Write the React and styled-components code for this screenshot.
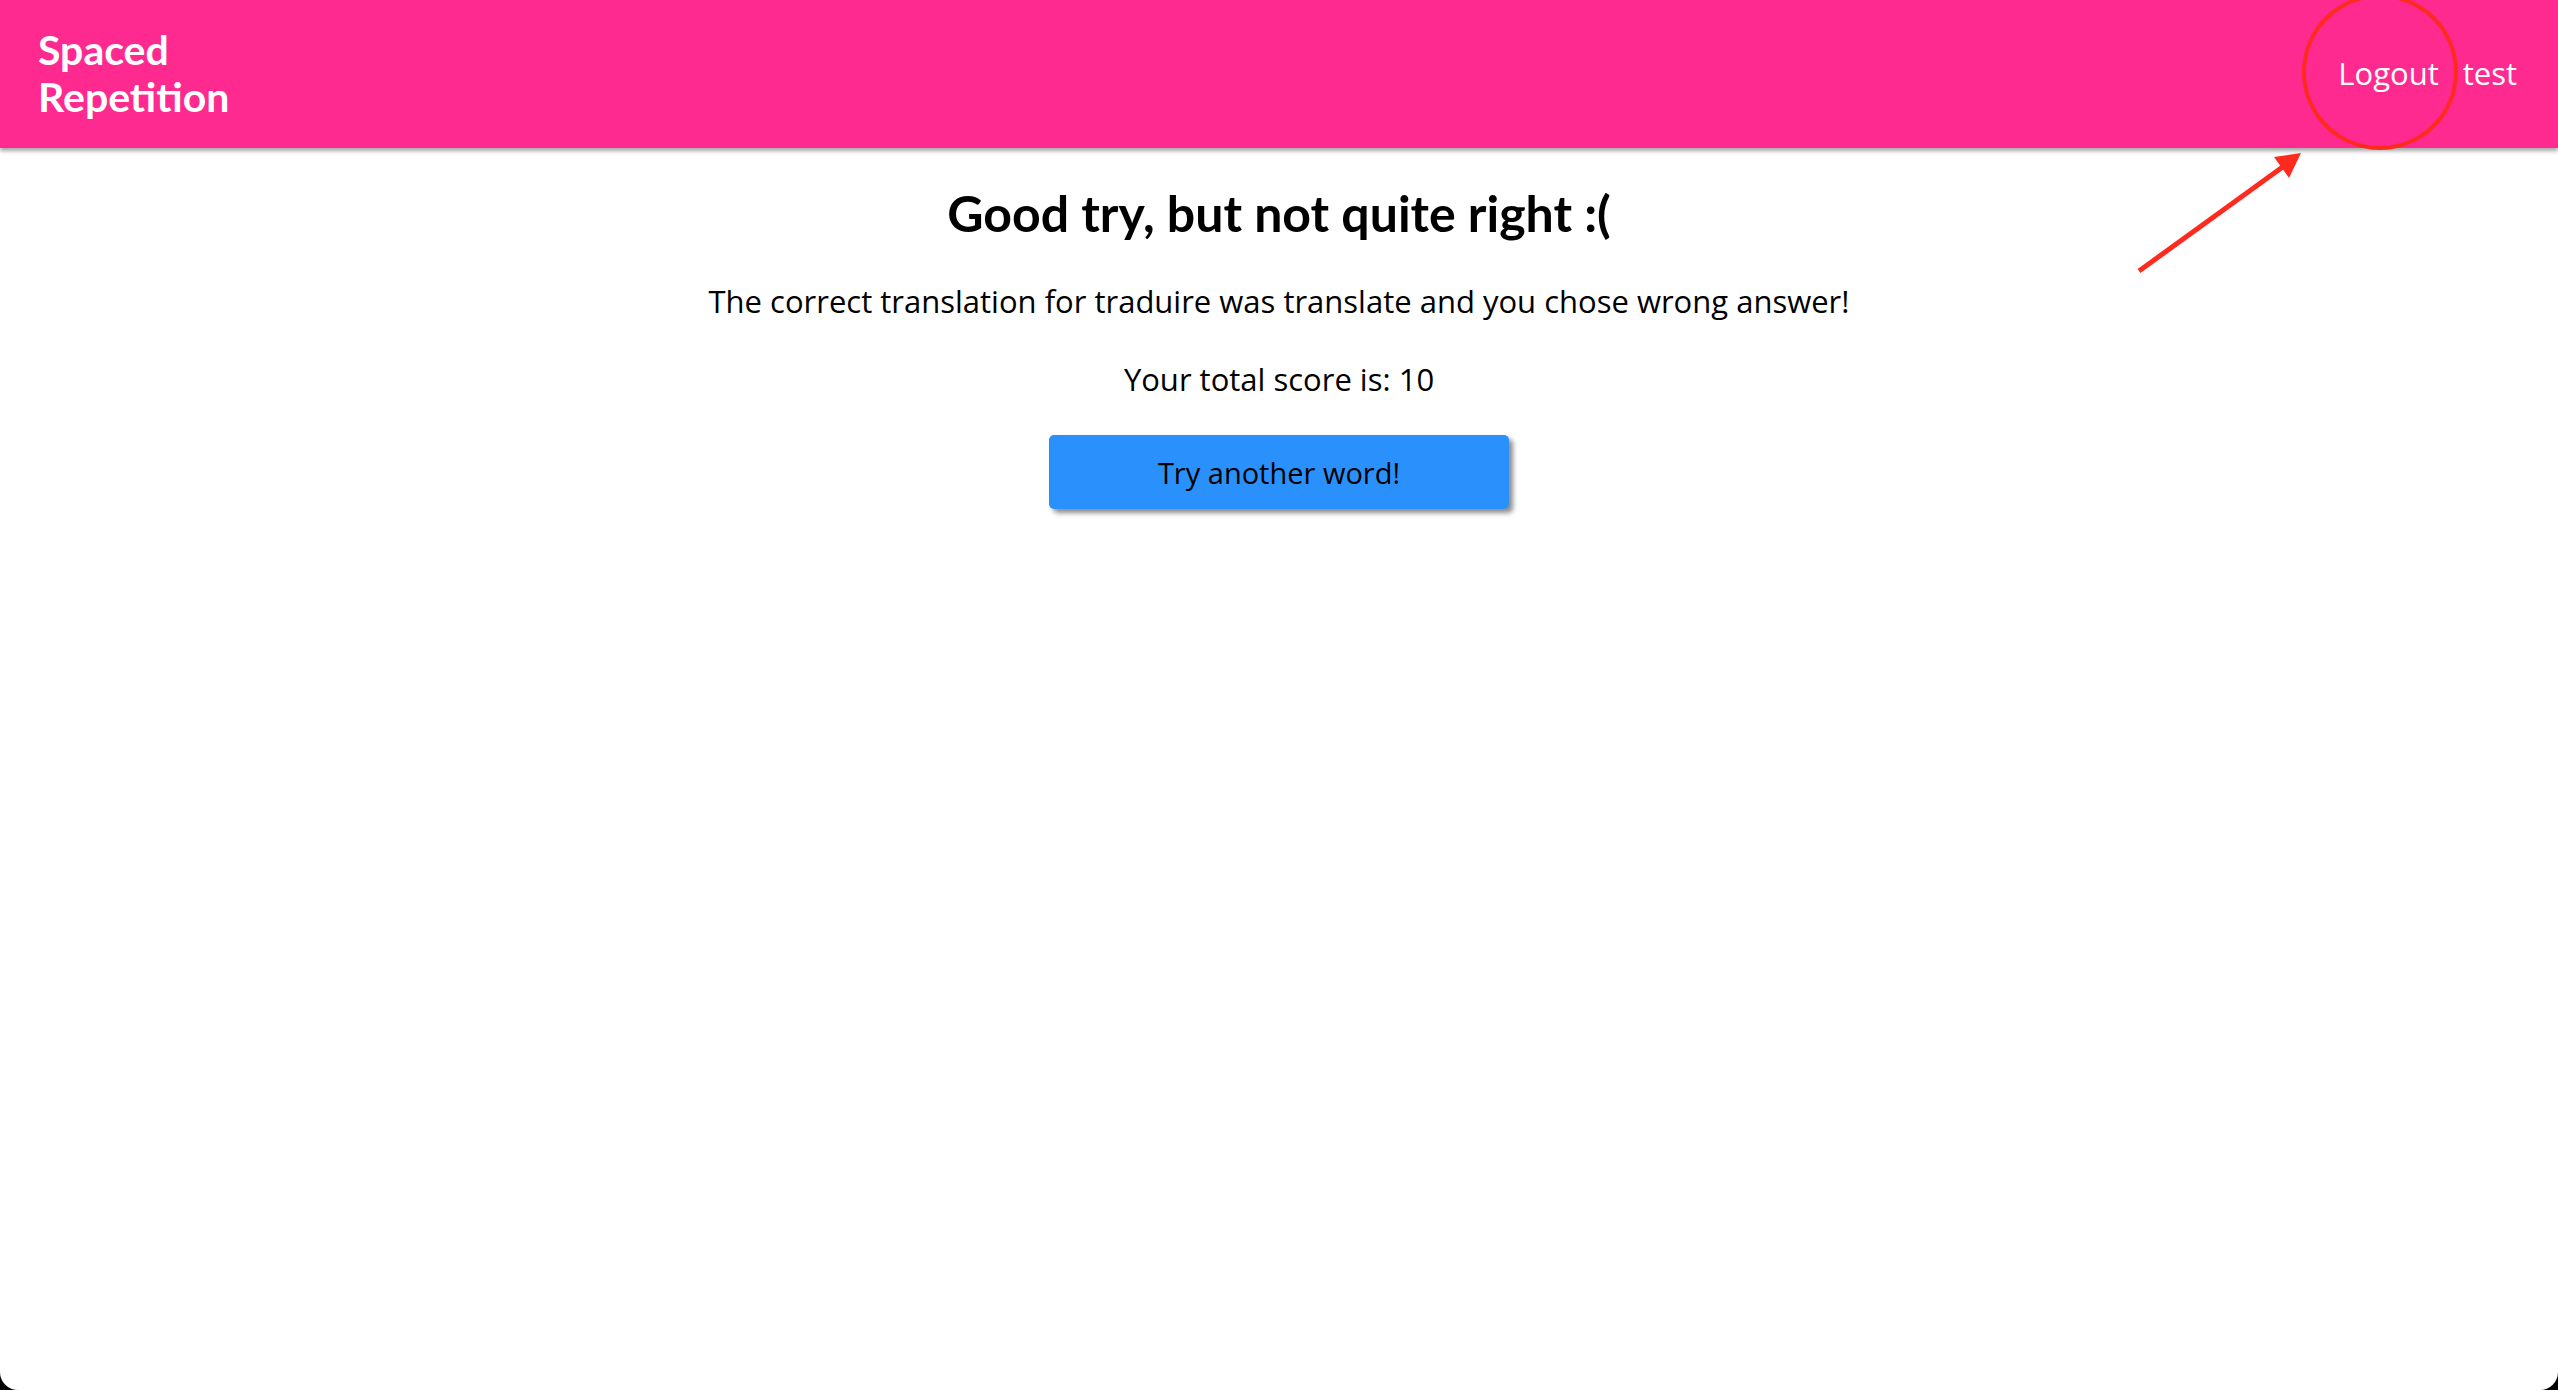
import React from 'react';
import styled, { createGlobalStyle } from 'styled-components';

const GlobalStyle = createGlobalStyle`
  html, body {
    margin: 0;
    padding: 0;
    background: #000;
  }
  body {
    font-family: "Open Sans", "Noto Sans", sans-serif;
    color: #000;
  }
`;

const App = () => {
  return (
    <>
      <GlobalStyle />
      <Page>
        <Header>
          <Logo>
            Spaced
            <br />
            Repetition
          </Logo>
          <Nav>
            <NavLink href="#">Logout</NavLink>
            <UserName>test</UserName>
          </Nav>
        </Header>
        <Main>
          <Heading>Good try, but not quite right :(</Heading>
          <Text>The correct translation for traduire was translate and you chose wrong answer!</Text>
          <Text>Your total score is: 10</Text>
          <Button>Try another word!</Button>
        </Main>
        <Annotation width="2558" height="300" viewBox="0 0 2558 300">
          <circle cx="2380" cy="72" r="76" fill="none" stroke="#ff2a1e" strokeWidth="4" />
          <line x1="2139" y1="271" x2="2284" y2="166" stroke="#ff2a1e" strokeWidth="5" />
          <polygon points="2301,153 2274,157 2289,178" fill="#ff2a1e" />
        </Annotation>
      </Page>
    </>
  );
};

export default App;

const Page = styled.div`
  position: relative;
  min-height: 1390px;
  background: #fff;
  border-radius: 0 0 18px 18px;
  overflow: hidden;
`;

const Header = styled.header`
  height: 148px;
  display: flex;
  align-items: center;
  justify-content: space-between;
  padding: 0 41px 0 38px;
  background: #fe2a8f;
  box-shadow: 0 3px 4px rgba(0, 0, 0, 0.35);
  box-sizing: border-box;
  position: relative;
  z-index: 1;
`;

const Logo = styled.h1`
  margin: 0 0 3px;
  font-family: Lato, "Noto Sans", sans-serif;
  font-size: 41px;
  line-height: 47px;
  font-weight: 700;
  color: #fff;
`;

const Nav = styled.nav`
  display: flex;
  align-items: center;
  gap: 24px;
  margin-bottom: 2px;
`;

const NavLink = styled.a`
  font-size: 31px;
  color: #fff;
  text-decoration: none;
`;

const UserName = styled.span`
  font-size: 31px;
  color: #fff;
`;

const Main = styled.main`
  display: flex;
  flex-direction: column;
  align-items: center;
  padding-top: 35px;
`;

const Heading = styled.h2`
  margin: 0 0 38px;
  font-family: Lato, "Noto Sans", sans-serif;
  font-size: 50px;
  line-height: 60px;
  font-weight: 700;
`;

const Text = styled.p`
  margin: 0 0 38px;
  font-size: 31px;
  line-height: 40px;
`;

const Button = styled.button`
  width: 460px;
  height: 74px;
  margin-top: -2px;
  border: none;
  border-radius: 5px;
  background: #2a91fc;
  color: #000;
  font-family: "Open Sans", "Noto Sans", sans-serif;
  font-size: 29px;
  box-shadow: 4px 4px 5px rgba(0, 0, 0, 0.45);
  cursor: pointer;
`;

const Annotation = styled.svg`
  position: absolute;
  top: 0;
  left: 0;
  z-index: 2;
  pointer-events: none;
`;
